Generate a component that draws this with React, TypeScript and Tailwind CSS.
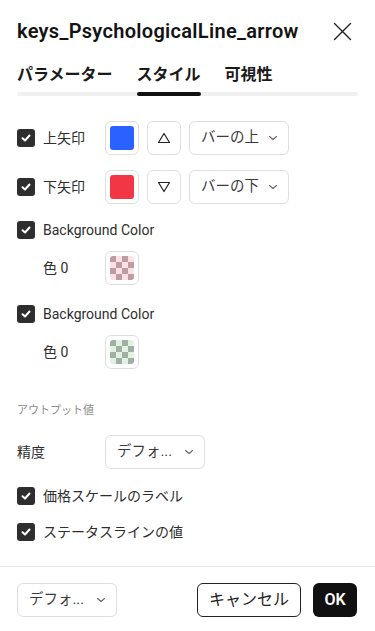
import React from "react";

const FONT = { fontFamily: "Roboto, 'Noto Sans CJK JP', sans-serif" };

function Check() {
  return (
    <span className="flex h-[18px] w-[18px] shrink-0 items-center justify-center rounded-[3px] bg-[#2e2e2e]">
      <svg width="12" height="12" viewBox="0 0 12 12" fill="none">
        <path d="M2.5 6.2 5 8.5 9.5 3.5" stroke="#fff" strokeWidth="2" strokeLinecap="round" strokeLinejoin="round" />
      </svg>
    </span>
  );
}

function Chevron() {
  return (
    <svg width="12" height="8" viewBox="0 0 12 8" fill="none">
      <path d="M2.5 2.5 6 5.5 9.5 2.5" stroke="#666" strokeWidth="1.1" strokeLinecap="round" strokeLinejoin="round" />
    </svg>
  );
}

function Select({ label, width }: { label: string; width: string }) {
  return (
    <div className={`flex h-[34px] ${width} items-center justify-between rounded-md border border-[#dedede] pl-[11px] pr-[9px] text-[14.5px] text-[#3a3a3a]`}>
      <span>{label}</span>
      <Chevron />
    </div>
  );
}

function Swatch({ color }: { color: string }) {
  return (
    <div className="flex h-[34px] w-[34px] items-center justify-center rounded-md border border-[#dedede]">
      <div className="h-[24px] w-[24px] rounded-[3px]" style={{ background: color }} />
    </div>
  );
}

function Checker({ dark, light }: { dark: string; light: string }) {
  const cells = Array.from({ length: 16 }, (_, i) => ((Math.floor(i / 4) + i) % 2 === 0 ? dark : light));
  return (
    <div className="flex h-[34px] w-[34px] items-center justify-center rounded-md border border-[#dedede]">
      <div className="grid h-[24px] w-[24px] grid-cols-4 overflow-hidden rounded-[3px]">
        {cells.map((c, i) => (
          <div key={i} style={{ background: c }} />
        ))}
      </div>
    </div>
  );
}

function TriButton({ down }: { down?: boolean }) {
  return (
    <div className="flex h-[34px] w-[34px] items-center justify-center rounded-md border border-[#dedede]">
      <svg width="14" height="12" viewBox="0 0 14 12" fill="none">
        {down ? (
          <path d="M1.5 1.5h11L7 10.5z" stroke="#222" strokeWidth="1.2" strokeLinejoin="round" />
        ) : (
          <path d="M7 1.5l5.5 9h-11z" stroke="#222" strokeWidth="1.2" strokeLinejoin="round" />
        )}
      </svg>
    </div>
  );
}

export default function App() {
  return (
    <div className="flex h-[631px] w-[375px] flex-col bg-white text-[#2e2e2e]" style={FONT}>
      {/* Header */}
      <div className="flex h-[62px] shrink-0 items-center justify-between pl-[17px] pr-[23px]">
        <h1 className="text-[20px] font-semibold tracking-[0.3px] text-[#131313]">keys_PsychologicalLine_arrow</h1>
        <svg width="19" height="19" viewBox="0 0 19 19" fill="none">
          <path d="M1.5 1.5l16 16M17.5 1.5l-16 16" stroke="#222" strokeWidth="1.4" strokeLinecap="round" />
        </svg>
      </div>

      {/* Tabs */}
      <div className="relative mx-[17px] flex gap-[24px] pt-[1px] text-[16px] font-bold text-[#1a1a1a]">
        <div className="absolute inset-x-0 bottom-0 h-[4px] rounded-full bg-[#f0f0f0]" />
        <div className="relative pb-[9px] leading-[24px]">パラメーター</div>
        <div className="relative leading-[24px]">
          <div className="pb-[5px]">スタイル</div>
          <div className="h-[4px] rounded-full bg-[#111]" />
        </div>
        <div className="relative leading-[24px]">可視性</div>
      </div>

      {/* Body */}
      <div className="flex flex-col px-[17px] text-[14px]">
        <div className="mt-[25px] flex h-[34px] items-center">
          <Check />
          <span className="ml-[8px] w-[62px]">上矢印</span>
          <div className="flex gap-[8px]">
            <Swatch color="#2962ff" />
            <TriButton />
            <Select label="バーの上" width="w-[100px]" />
          </div>
        </div>
        <div className="mt-[15px] flex h-[34px] items-center">
          <Check />
          <span className="ml-[8px] w-[62px]">下矢印</span>
          <div className="flex gap-[8px]">
            <Swatch color="#f23645" />
            <TriButton down />
            <Select label="バーの下" width="w-[100px]" />
          </div>
        </div>
        <div className="mt-[9px] flex h-[34px] items-center">
          <Check />
          <span className="ml-[8px]">Background Color</span>
        </div>
        <div className="mt-[4px] flex h-[34px] items-center pl-[26px]">
          <span className="w-[62px]">色 0</span>
          <Checker dark="#bf9ca1" light="#fde1e4" />
        </div>
        <div className="mt-[12px] flex h-[34px] items-center">
          <Check />
          <span className="ml-[8px]">Background Color</span>
        </div>
        <div className="mt-[4px] flex h-[34px] items-center pl-[26px]">
          <span className="w-[62px]">色 0</span>
          <Checker dark="#a0b0a4" light="#e1f2e3" />
        </div>
        <div className="mt-[32px] flex h-[20px] items-center text-[11px] text-[#8a8a8a]">アウトプット値</div>
        <div className="mt-[14px] flex h-[34px] items-center">
          <span className="w-[88px]">精度</span>
          <Select label="デフォ..." width="w-[100px]" />
        </div>
        <div className="mt-[10px] flex h-[34px] items-center">
          <Check />
          <span className="ml-[8px]">価格スケールのラベル</span>
        </div>
        <div className="mt-[2px] flex h-[34px] items-center">
          <Check />
          <span className="ml-[8px]">ステータスラインの値</span>
        </div>
      </div>

      {/* Footer */}
      <div className="mt-[17px] flex items-center justify-between border-t border-[#e6e6e6] pl-[17px] pr-[18px] pt-[16px]">
        <Select label="デフォ..." width="w-[100px]" />
        <div className="flex gap-[12px]">
          <button className="h-[34px] w-[104px] rounded-md border border-[#222] text-[16px] text-[#222]">キャンセル</button>
          <button className="h-[34px] w-[44px] rounded-md bg-[#111] text-[16px] font-semibold text-white">OK</button>
        </div>
      </div>
    </div>
  );
}
